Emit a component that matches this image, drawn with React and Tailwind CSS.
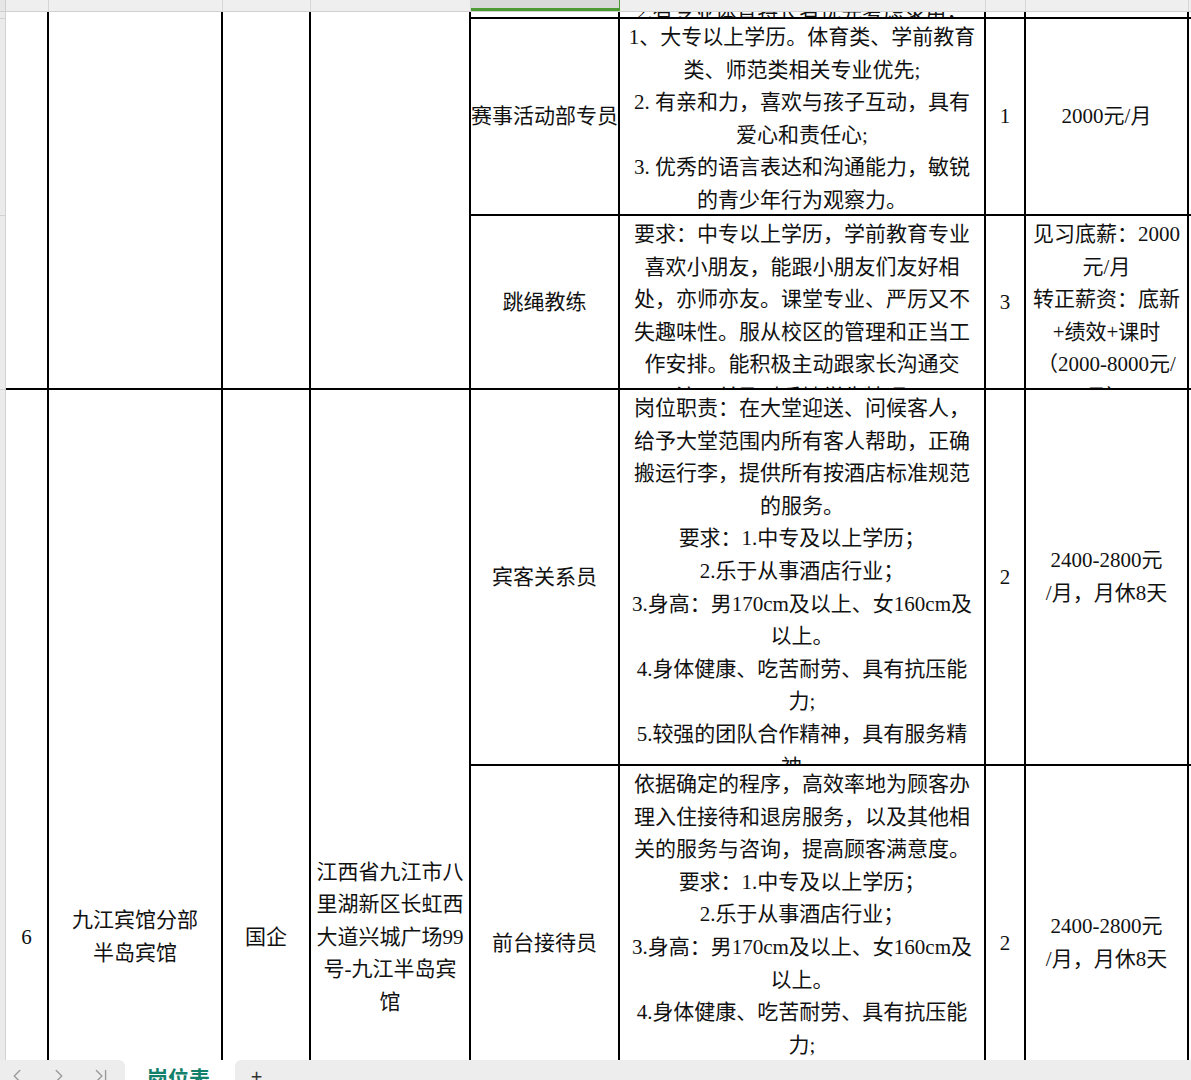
import { ChevronLeft, ChevronRight, ChevronLast } from "lucide-react";

const COLS = "grid grid-cols-[6px_43px_174px_88px_160px_149px_366px_40px_163px_1fr]";

const Lines = ({ lines, top }) => (
    <div className={top
        ? "flex h-full flex-col items-center justify-start overflow-hidden pt-[2px]"
        : "flex h-full flex-col items-center justify-center overflow-hidden"}>
        {lines.map((l, i) => (
            <div key={i} className="whitespace-nowrap leading-[32.6px]">{l}</div>
        ))}
    </div>
);

const Cell = ({ pos, children }) => (
    <div className={"overflow-hidden border-b-2 border-r-2 border-black " + pos}>{children}</div>
);

const Gutter = ({ pos }) => (
    <div className={"border-b border-r border-[#d2d2d2] bg-[#ebebeb] " + pos} />
);

const Rest = ({ pos }) => <div className={"border-b-2 border-black " + pos} />;

export default function App() {
    return (
        <div className="flex h-[1080px] w-full flex-col overflow-hidden bg-white font-['Liberation_Serif','Noto_Sans_CJK_SC',serif] text-[21px] text-[#111]">
            {/* column header strip */}
            <div className={COLS + " h-[12px] shrink-0 border-b border-[#d0d0d0] bg-[#efefef]"}>
                <div className="border-r border-[#d0d0d0] bg-[#e6e6e6]" />
                <div className="border-r border-[#d6d6d6]" />
                <div className="border-r border-[#d6d6d6]" />
                <div className="border-r border-[#d6d6d6]" />
                <div className="border-r border-[#d6d6d6]" />
                <div className="border-b-[3px] border-r border-[#4c9a32] bg-[#d9d9d9]" />
                <div className="border-r border-[#d6d6d6]" />
                <div className="border-r border-[#d6d6d6]" />
                <div className="border-r border-[#d6d6d6]" />
                <div />
            </div>

            {/* sheet body */}
            <div className="min-h-0 flex-1 overflow-hidden">
                <div className={COLS + " grid-rows-[7px_197px_174px_376px_356px_364px]"}>
                    <Gutter pos="col-start-1 row-start-1" />
                    <Gutter pos="col-start-1 row-start-2" />
                    <Gutter pos="col-start-1 row-start-3" />
                    <Gutter pos="col-start-1 row-start-4 row-span-3" />

                    {/* previous company, merged cells */}
                    <Cell pos="col-start-2 row-start-1 row-span-3" />
                    <Cell pos="col-start-3 row-start-1 row-span-3" />
                    <Cell pos="col-start-4 row-start-1 row-span-3" />
                    <Cell pos="col-start-5 row-start-1 row-span-3" />

                    {/* clipped row */}
                    <Cell pos="col-start-6 row-start-1" />
                    <Cell pos="col-start-7 row-start-1">
                        <div className="flex h-full flex-col items-center justify-end">
                            <div className="mb-[-12px] whitespace-nowrap leading-[32.6px]">2.有专业体育特长者优先考虑录用；</div>
                        </div>
                    </Cell>
                    <Cell pos="col-start-8 row-start-1" />
                    <Cell pos="col-start-9 row-start-1" />
                    <Rest pos="col-start-10 row-start-1" />

                    {/* 赛事活动部专员 */}
                    <Cell pos="col-start-6 row-start-2"><Lines lines={["赛事活动部专员"]} /></Cell>
                    <Cell pos="col-start-7 row-start-2">
                        <Lines top lines={[
                            "1、大专以上学历。体育类、学前教育",
                            "类、师范类相关专业优先;",
                            "2. 有亲和力，喜欢与孩子互动，具有",
                            "爱心和责任心;",
                            "3. 优秀的语言表达和沟通能力，敏锐",
                            "的青少年行为观察力。",
                        ]} />
                    </Cell>
                    <Cell pos="col-start-8 row-start-2"><Lines lines={["1"]} /></Cell>
                    <Cell pos="col-start-9 row-start-2"><Lines lines={["2000元/月"]} /></Cell>
                    <Rest pos="col-start-10 row-start-2" />

                    {/* 跳绳教练 */}
                    <Cell pos="col-start-6 row-start-3"><Lines lines={["跳绳教练"]} /></Cell>
                    <Cell pos="col-start-7 row-start-3">
                        <Lines top lines={[
                            "要求：中专以上学历，学前教育专业",
                            "喜欢小朋友，能跟小朋友们友好相",
                            "处，亦师亦友。课堂专业、严厉又不",
                            "失趣味性。服从校区的管理和正当工",
                            "作安排。能积极主动跟家长沟通交",
                            "流，并及时反馈学生情况。",
                        ]} />
                    </Cell>
                    <Cell pos="col-start-8 row-start-3"><Lines lines={["3"]} /></Cell>
                    <Cell pos="col-start-9 row-start-3">
                        <Lines top lines={[
                            "见习底薪：2000",
                            "元/月",
                            "转正薪资：底新",
                            "+绩效+课时",
                            "（2000-8000元/",
                            "月）",
                        ]} />
                    </Cell>
                    <Rest pos="col-start-10 row-start-3" />

                    {/* 6 九江宾馆分部半岛宾馆 */}
                    <Cell pos="col-start-2 row-start-4 row-span-3"><Lines lines={["6"]} /></Cell>
                    <Cell pos="col-start-3 row-start-4 row-span-3"><Lines lines={["九江宾馆分部", "半岛宾馆"]} /></Cell>
                    <Cell pos="col-start-4 row-start-4 row-span-3"><Lines lines={["国企"]} /></Cell>
                    <Cell pos="col-start-5 row-start-4 row-span-3">
                        <Lines lines={["江西省九江市八", "里湖新区长虹西", "大道兴城广场99", "号-九江半岛宾", "馆"]} />
                    </Cell>

                    <Cell pos="col-start-6 row-start-4"><Lines lines={["宾客关系员"]} /></Cell>
                    <Cell pos="col-start-7 row-start-4">
                        <Lines top lines={[
                            "岗位职责：在大堂迎送、问候客人，",
                            "给予大堂范围内所有客人帮助，正确",
                            "搬运行李，提供所有按酒店标准规范",
                            "的服务。",
                            "要求：1.中专及以上学历；",
                            "2.乐于从事酒店行业；",
                            "3.身高：男170cm及以上、女160cm及",
                            "以上。",
                            "4.身体健康、吃苦耐劳、具有抗压能",
                            "力;",
                            "5.较强的团队合作精神，具有服务精",
                            "神。",
                        ]} />
                    </Cell>
                    <Cell pos="col-start-8 row-start-4"><Lines lines={["2"]} /></Cell>
                    <Cell pos="col-start-9 row-start-4"><Lines lines={["2400-2800元", "/月，月休8天"]} /></Cell>
                    <Rest pos="col-start-10 row-start-4" />

                    <Cell pos="col-start-6 row-start-5"><Lines lines={["前台接待员"]} /></Cell>
                    <Cell pos="col-start-7 row-start-5">
                        <Lines top lines={[
                            "依据确定的程序，高效率地为顾客办",
                            "理入住接待和退房服务，以及其他相",
                            "关的服务与咨询，提高顾客满意度。",
                            "要求：1.中专及以上学历；",
                            "2.乐于从事酒店行业；",
                            "3.身高：男170cm及以上、女160cm及",
                            "以上。",
                            "4.身体健康、吃苦耐劳、具有抗压能",
                            "力;",
                            "5.较强的团队合作精神，具有服务精",
                            "神。",
                        ]} />
                    </Cell>
                    <Cell pos="col-start-8 row-start-5"><Lines lines={["2"]} /></Cell>
                    <Cell pos="col-start-9 row-start-5"><Lines lines={["2400-2800元", "/月，月休8天"]} /></Cell>
                    <Rest pos="col-start-10 row-start-5" />

                    <Cell pos="col-start-6 row-start-6" />
                    <Cell pos="col-start-7 row-start-6" />
                    <Cell pos="col-start-8 row-start-6" />
                    <Cell pos="col-start-9 row-start-6" />
                    <Rest pos="col-start-10 row-start-6" />
                </div>
            </div>

            {/* sheet tabs */}
            <div className="flex h-[20px] shrink-0 overflow-hidden bg-white">
                <div className="flex w-[125px] items-start gap-[20px] rounded-tr-[6px] bg-[#ededed] pl-[6px] pt-[5px] text-[#9b9b9b]">
                    <ChevronLeft size={22} strokeWidth={1.5} />
                    <ChevronRight size={22} strokeWidth={1.5} />
                    <ChevronLast size={22} strokeWidth={1.5} />
                </div>
                <div className="w-[110px] pl-[22px] pt-[7px] font-['Noto_Sans_CJK_SC',sans-serif] text-[21px] font-bold leading-none text-[#13806b]">岗位表</div>
                <div className="flex-1 rounded-tl-[6px] bg-[#ededed] pl-[16px] pt-[6px] font-['Noto_Sans_CJK_SC',sans-serif] text-[20px] leading-none text-[#333]">+</div>
            </div>
        </div>
    );
}
